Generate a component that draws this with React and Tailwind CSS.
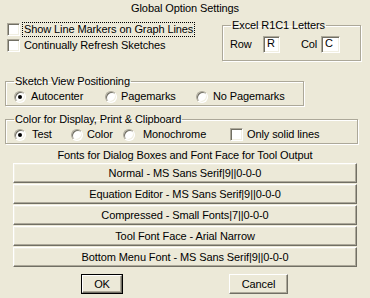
import React from 'react'

const Check = ({ checked }) => (
    <span className="inline-block w-[13px] h-[13px] shrink-0 bg-white border border-t-[#aca899] border-l-[#aca899] border-b-white border-r-white shadow-[inset_1px_1px_0_#716f64,inset_-1px_-1px_0_#f1efe2]">
        {checked && <span className="block">✓</span>}
    </span>
)

const Radio = ({ checked }) => (
    <span className="relative inline-flex items-center justify-center w-[12px] h-[12px] shrink-0 rounded-full bg-white border border-t-[#aca899] border-l-[#aca899] border-b-white border-r-white shadow-[inset_1px_1px_0_#716f64,inset_-1px_-1px_0_#f1efe2]">
        {checked && <span className="block w-[4px] h-[4px] rounded-full bg-black" />}
    </span>
)

const Group = ({ label, className, children }) => (
    <fieldset className={`border border-[#aca899] shadow-[inset_1px_1px_0_#ffffff,1px_1px_0_#ffffff] ${className}`}>
        <legend className="ml-[8px] px-[1px] leading-[13px]">{label}</legend>
        {children}
    </fieldset>
)

const FontButton = ({ children }) => (
    <button className="h-[20px] w-full flex items-center justify-center leading-[13px] bg-[#ece9d8] border border-t-white border-l-white border-b-[#716f64] border-r-[#716f64] shadow-[inset_-1px_-1px_0_#aca899,inset_1px_1px_0_#f1efe2]">
        {children}
    </button>
)

const App = () => {
    const fontButtons = [
        'Normal - MS Sans Serif|9||0-0-0',
        'Equation Editor - MS Sans Serif|9||0-0-0',
        'Compressed - Small Fonts|7||0-0-0',
        'Tool Font Face - Arial Narrow',
        'Bottom Menu Font - MS Sans Serif|9||0-0-0',
    ]

    return (
        <div className="w-[370px] h-[298px] bg-[#ece9d8] text-black text-[11px] tracking-[-0.1px] font-['Liberation_Sans',Arial,sans-serif] overflow-hidden">
            <div className="h-[16px] pt-[2px] text-center leading-[13px]">Global Option Settings</div>

            <div className="flex h-[46px]">
                <div className="flex flex-col gap-[3px] ml-[7px] mt-[7px]">
                    <label className="flex items-center gap-[3px] leading-[13px]">
                        <Check />
                        <span className="px-[1px] outline outline-1 outline-dotted outline-black">Show Line Markers on Graph Lines</span>
                    </label>
                    <label className="flex items-center gap-[4px] leading-[13px]">
                        <Check />
                        <span>Continually Refresh Sketches</span>
                    </label>
                </div>
                <Group label="Excel R1C1 Letters" className="ml-auto mr-[9px] mt-[3px] w-[139px] h-[42px] flex">
                    <div className="flex items-center h-[24px] pl-[7px]">
                        <span className="w-[33px]">Row</span>
                        <span className="w-[17px] h-[17px] bg-white border border-t-[#aca899] border-l-[#aca899] border-b-white border-r-white shadow-[inset_1px_1px_0_#716f64,inset_-1px_-1px_0_#f1efe2] pl-[3px] leading-[12px]">R</span>
                        <span className="ml-[21px] w-[20px]">Col</span>
                        <span className="w-[19px] h-[17px] bg-white border border-t-[#aca899] border-l-[#aca899] border-b-white border-r-white shadow-[inset_1px_1px_0_#716f64,inset_-1px_-1px_0_#f1efe2] pl-[3px] leading-[12px]">C</span>
                    </div>
                </Group>
            </div>

            <Group label="Sketch View Positioning" className="ml-[5px] mt-[13px] w-[299px] h-[31px]">
                <div className="flex items-center h-[17px] pl-[8px]">
                    <Radio checked />
                    <span className="ml-[5px] w-[74px]">Autocenter</span>
                    <Radio />
                    <span className="ml-[4px] w-[75px]">Pagemarks</span>
                    <Radio />
                    <span className="ml-[5px]">No Pagemarks</span>
                </div>
            </Group>

            <Group label="Color for Display, Print & Clipboard" className="ml-[5px] mt-[7px] w-[353px] h-[31px]">
                <div className="flex items-center h-[17px] pl-[8px]">
                    <Radio checked />
                    <span className="ml-[6px] w-[39px]">Test</span>
                    <Radio />
                    <span className="ml-[4px] w-[36px]">Color</span>
                    <Radio />
                    <span className="ml-[8px] w-[87px]">Monochrome</span>
                    <Check />
                    <span className="ml-[4px]">Only solid lines</span>
                </div>
            </Group>

            <div className="mt-[5px] text-center leading-[13px]">Fonts for Dialog Boxes and Font Face for Tool Output</div>

            <div className="flex flex-col gap-[1px] mx-[13px] mt-[1px]">
                {fontButtons.map((label) => (
                    <FontButton key={label}>{label}</FontButton>
                ))}
            </div>

            <div className="flex mt-[7px] h-[20px]">
                <button className="ml-[81px] w-[42px] h-[20px] border border-black bg-[#ece9d8] flex items-center justify-center">
                    <span className="w-full h-full flex items-center justify-center border border-t-white border-l-white border-b-[#716f64] border-r-[#716f64] shadow-[inset_-1px_-1px_0_#aca899]">OK</span>
                </button>
                <button className="ml-[106px] w-[59px] h-[20px] flex items-center justify-center bg-[#ece9d8] border border-t-white border-l-white border-b-[#716f64] border-r-[#716f64] shadow-[inset_-1px_-1px_0_#aca899]">
                    Cancel
                </button>
            </div>
        </div>
    )
}

export default App
